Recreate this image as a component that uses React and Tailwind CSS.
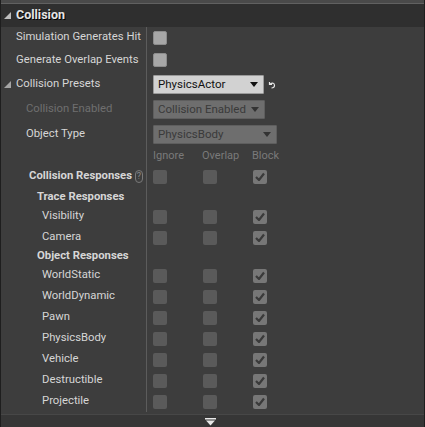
import React from 'react'

const rowsTrace = ['Visibility', 'Camera']
const rowsObject = ['WorldStatic', 'WorldDynamic', 'Pawn', 'PhysicsBody', 'Vehicle', 'Destructible', 'Projectile']

function Caret({ className }) {
  return (
    <svg width="7" height="7" viewBox="0 0 7 7" className={className}>
      <polygon points="7,0 7,7 0,7" fill="currentColor" />
    </svg>
  )
}

function Box({ kind }) {
  if (kind === 'light')
    return <div className="w-[14px] h-[14px] rounded-[2px] bg-[#a7a7a7] border border-[#8c8c8c]" />
  if (kind === 'checked')
    return (
      <div className="w-[14px] h-[14px] rounded-[2px] bg-[#777777] flex items-center justify-center">
        <svg width="10" height="9" viewBox="0 0 10 9">
          <path d="M1 5 L4 8 L9 1.5" stroke="#3a3a3a" strokeWidth="2.2" fill="none" />
        </svg>
      </div>
    )
  return <div className="w-[14px] h-[14px] rounded-[2px] bg-[#5a5a5a]" />
}

function Dropdown({ label, width, light }) {
  return (
    <div
      className={`${width} h-[19px] flex items-center justify-between pl-[4px] pr-[5px] rounded-[1px] border ${
        light ? 'bg-[#d2d2d2] border-[#9a9a9a] text-[#111111]' : 'bg-[#6e6e6e] border-[#5e5e5e] text-[#3a3a3a]'
      }`}
    >
      <span className="text-[11.5px] leading-none">{label}</span>
      <svg width="8" height="5" viewBox="0 0 8 5">
        <polygon points="0,0 8,0 4,5" fill={light ? '#111111' : '#333333'} />
      </svg>
    </div>
  )
}

function Row({ h, children, right }) {
  return (
    <div className={`flex ${h}`}>
      <div className="w-[145px] shrink-0 flex items-center">{children}</div>
      <div className="w-px shrink-0 bg-[#5c5c5c]" />
      <div className="flex-1 flex items-center pl-[6px]">{right}</div>
    </div>
  )
}

function Triple() {
  return (
    <div className="flex gap-[36px]">
      <Box />
      <Box />
      <Box kind="checked" />
    </div>
  )
}

export default function App() {
  return (
    <div className="w-[425px] h-[427px] bg-[#3d3d3d] border-x border-[#1e1e1e] flex flex-col font-[Roboto,sans-serif] text-[11.3px] text-[#d6d6d6] overflow-hidden">
      <div className="h-[3px] bg-[#4a4a4a]" />
      <div className="h-px bg-[#616161]" />

      {/* Header */}
      <div className="h-[23px] bg-[#2f2f2f] flex items-center pl-[3px] gap-[5px]">
        <Caret className="text-[#bdbdbd]" />
        <span className="font-bold text-[12.5px] text-[#e6e6e6] [text-shadow:1px_1px_0_#000]">Collision</span>
      </div>

      <Row h="h-[21px]" right={<Box kind="light" />}>
        <span className="pl-[15px]">Simulation Generates Hit</span>
      </Row>
      <Row h="h-[24px]" right={<Box kind="light" />}>
        <span className="pl-[15px]">Generate Overlap Events</span>
      </Row>
      <Row
        h="h-[25px]"
        right={
          <div className="flex items-center gap-[4px]">
            <Dropdown label="PhysicsActor" width="w-[111px]" light />
            <svg width="8" height="8" viewBox="0 0 8 8">
              <path d="M1.5 1 L1.5 3.5 L4 3.5 M1.5 3.5 Q6.5 0.5 6.5 4.5 Q6.5 7 3.5 7" stroke="#e8e8e8" strokeWidth="1.2" fill="none" />
            </svg>
          </div>
        }
      >
        <div className="flex items-center gap-[5px] pl-[3px]">
          <Caret className="text-[#a5a5a5]" />
          <span>Collision Presets</span>
        </div>
      </Row>
      <Row h="h-[25px]" right={<Dropdown label="Collision Enabled" width="w-[112px]" />}>
        <span className="pl-[25px] text-[#6f6f6f]">Collision Enabled</span>
      </Row>
      <Row h="h-[25px]" right={<Dropdown label="PhysicsBody" width="w-[124px]" />}>
        <span className="pl-[25px]">Object Type</span>
      </Row>
      <Row
        h="h-[18px]"
        right={
          <div className="flex text-[#7a7a7a] text-[11px]">
            <span className="w-[49px]">Ignore</span>
            <span className="w-[50px]">Overlap</span>
            <span>Block</span>
          </div>
        }
      />
      <Row h="h-[23px]" right={<Triple />}>
        <div className="flex items-center justify-between w-full pl-[28px] pr-[3px]">
          <span className="font-bold">Collision Responses</span>
          <div className="w-[8px] h-[13px] rounded-full border border-[#7a7a7a] text-[#8a8a8a] text-[9px] leading-none flex items-center justify-center">?</div>
        </div>
      </Row>
      <Row h="h-[18px]">
        <span className="pl-[36px] font-bold">Trace Responses</span>
      </Row>
      {rowsTrace.map((r) => (
        <Row key={r} h="h-[21px]" right={<Triple />}>
          <span className="pl-[41px]">{r}</span>
        </Row>
      ))}
      <Row h="h-[17px]">
        <span className="pl-[36px] font-bold">Object Responses</span>
      </Row>
      {rowsObject.map((r) => (
        <Row key={r} h="h-[21px]" right={<Triple />}>
          <span className="pl-[41px]">{r}</span>
        </Row>
      ))}

      <div className="flex-1" />
      <div className="h-[13px] bg-[#363636] border-t border-[#474747] flex justify-center items-center pr-[4px]">
        <svg width="11" height="8" viewBox="0 0 11 8" className="mt-[1px]">
          <rect x="0" y="0" width="11" height="1.5" fill="#e8e8e8" />
          <polygon points="1,2.5 10,2.5 5.5,7.5" fill="#e8e8e8" />
        </svg>
      </div>
    </div>
  )
}
